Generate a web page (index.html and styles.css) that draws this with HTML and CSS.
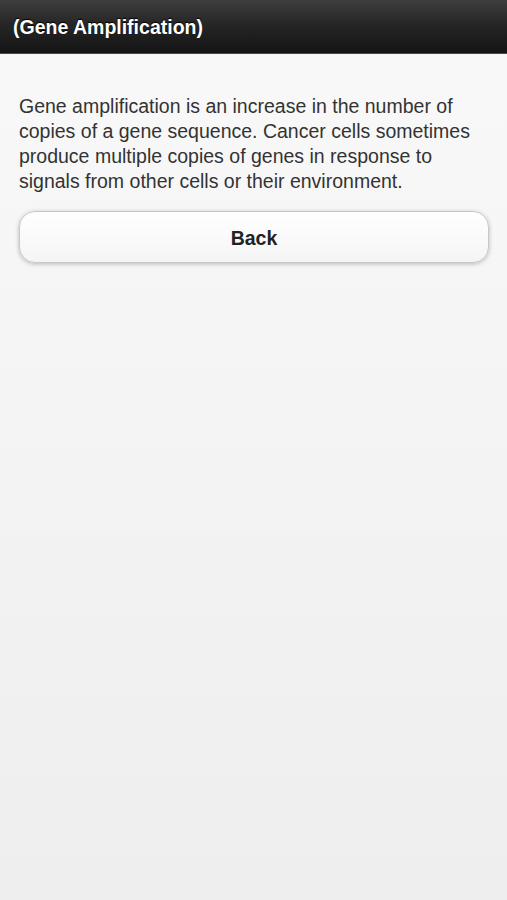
FILE: index.html
```html
<!DOCTYPE html>
<html>
<head>
<meta charset="utf-8">
<link rel="stylesheet" href="styles.css">
</head>
<body>
<header class="bar"><h1 class="title">(Gene Amplification)</h1></header>
<main class="content">
<p class="desc">Gene amplification is an increase in the number of copies of a gene sequence. Cancer cells sometimes produce multiple copies of genes in response to signals from other cells or their environment.</p>
<button class="btn">Back</button>
</main>
</body>
</html>
```
FILE: styles.css
```css
html, body { margin: 0; padding: 0; }
body {
  width: 507px;
  height: 900px;
  font-family: "Liberation Sans", Arial, sans-serif;
  background: linear-gradient(to bottom, #f9f9f9 0%, #eeeeee 100%);
}
.bar {
  height: 53px;
  border-bottom: 1px solid #4a4a4a;
  background: linear-gradient(to bottom, #3e3e3e 0%, #262626 45%, #141414 100%);
  display: flex;
  align-items: center;
  padding: 0 13px;
}
.title {
  margin: 0;
  color: #fff;
  font-size: 19.5px;
  font-weight: bold;
  text-shadow: 0 -1px 1px #000;
  padding-top: 2px;
}
.content { padding: 0 19px; }
.desc {
  margin: 0;
  padding-top: 40px;
  font-size: 19.5px;
  line-height: 25px;
  color: #333;
}
.btn {
  display: block;
  width: 470px;
  height: 52px;
  margin-top: 17px;
  border: 1px solid #c8c8c8;
  border-radius: 16px;
  background: linear-gradient(to bottom, #ffffff 0%, #f5f5f5 100%);
  box-shadow: 0 1px 4px rgba(0,0,0,0.25);
  font-family: "Liberation Sans", Arial, sans-serif;
  font-size: 19.5px;
  font-weight: bold;
  color: #222;
  padding: 2px 0 0 0;
}
```
